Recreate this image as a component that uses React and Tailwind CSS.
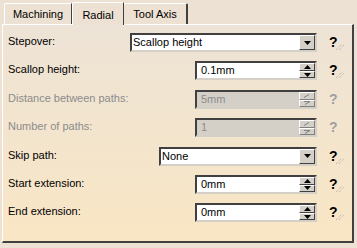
import React from "react";

const FONT = { fontFamily: '"Liberation Sans", Arial, sans-serif' };

function Help({ disabled }) {
  return (
    <div className="relative w-[20px] h-[19px] ml-[12px]">
      <span
        className={`absolute left-[0px] top-[0px] text-[14px] leading-[18px] font-bold ${disabled ? "text-[#a0a0a0]" : "text-black"}`}
      >
        ?
      </span>
      {!disabled && (
        <svg className="absolute left-[6px] top-[10px]" width="10" height="8" viewBox="0 0 10 8">
          <path d="M1 7 L7 1 M4 7 L9 2" stroke="#b0b0b0" strokeWidth="1" strokeDasharray="1 1" />
        </svg>
      )}
    </div>
  );
}

function DropButton() {
  return (
    <div className="w-[16px] h-[15px] bg-[#d4d0c8] border border-t-white border-l-white border-r-[#404040] border-b-[#404040] flex items-center justify-center">
      <svg width="7" height="4" viewBox="0 0 7 4">
        <path d="M0 0 H7 L3.5 4 Z" fill="#000" />
      </svg>
    </div>
  );
}

function Combo({ value, width }) {
  return (
    <div
      className={`${width} h-[19px] bg-white border-2 border-t-[#404040] border-l-[#404040] border-r-[#d4d0c8] border-b-[#d4d0c8] flex items-center`}
    >
      <span className="flex-1 pl-[1px] text-[11px] text-black leading-[15px]">{value}</span>
      <DropButton />
    </div>
  );
}

function Arrow({ up, disabled }) {
  if (disabled) {
    return (
      <svg width="8" height="4" viewBox="0 0 8 4">
        <path d={up ? "M1 3.5 L6 0.5" : "M1 0.5 H7 M2 3.5 L7 0.5"} stroke="#808080" strokeWidth="1" />
      </svg>
    );
  }
  return (
    <svg width="7" height="4" viewBox="0 0 7 4">
      <path d={up ? "M3.5 0 L7 4 H0 Z" : "M0 0 H7 L3.5 4 Z"} fill="#000" />
    </svg>
  );
}

function Spin({ value, disabled }) {
  return (
    <div
      className={`w-[122px] h-[19px] border-2 border-t-[#404040] border-l-[#404040] border-r-[#d4d0c8] border-b-[#d4d0c8] flex items-center ${disabled ? "bg-[#d4d0c8]" : "bg-white"}`}
    >
      <span className={`flex-1 pl-[4px] text-[11px] leading-[15px] ${disabled ? "text-[#8c8c8c]" : "text-black"}`}>
        {value}
      </span>
      <div className={`w-[16px] h-[15px] flex flex-col ${disabled ? "" : "bg-[#404040]"}`}>
        <div className={`h-[8px] bg-[#d4d0c8] border border-t-white border-l-white flex items-center justify-center ${disabled ? "border-r-[#808080] border-b-[#808080]" : "border-r-[#404040] border-b-[#404040]"}`}>
          <Arrow up disabled={disabled} />
        </div>
        <div className={`h-[7px] bg-[#d4d0c8] border border-t-white border-l-white flex items-center justify-center ${disabled ? "border-r-[#808080] border-b-[#808080]" : "border-r-[#404040] border-b-[#404040]"}`}>
          <Arrow disabled={disabled} />
        </div>
      </div>
    </div>
  );
}

function Row({ label, disabled, children }) {
  return (
    <div className="flex items-start h-[19px]">
      <span
        className={`flex-1 text-[11px] leading-[13px] pt-[2px] ${disabled ? "text-[#8c8c8c]" : "text-black"}`}
      >
        {label}
      </span>
      {children}
      <Help disabled={disabled} />
    </div>
  );
}

export default function App() {
  return (
    <div
      style={FONT}
      className="w-[357px] h-[248px] bg-[#ece1d2] overflow-hidden relative"
    >
      {/* tab strip */}
      <div className="flex items-end h-[24px] pl-[4px]">
        <div className="w-[68px] h-[21px] border border-b-0 border-t-white border-l-white border-r-[#404040] rounded-tl-[2px] flex items-center justify-center text-[11px] text-black">
          Machining
        </div>
        <div className="relative z-10 w-[52px] h-[23px] -mb-[1px] bg-[#ece1d2] border border-b-0 border-t-white border-l-white border-r-[#404040] rounded-tl-[2px] flex items-start pt-[4px] justify-center text-[11px] text-black">
          Radial
        </div>
        <div className="w-[64px] h-[21px] border border-b-0 border-l-0 border-t-white border-r-[#404040] border-r-2 rounded-tr-[2px] flex items-center justify-center text-[11px] text-black">
          Tool Axis
        </div>
      </div>

      {/* panel */}
      <div className="ml-[2px] w-[352px] h-[219px] border border-t-white border-l-white border-r-[#404040] border-b-[#404040] border-r-2 border-b-2 bg-gradient-to-b from-[#ede3d6] to-[#f9e6c4] pl-[5px] pr-[3px] pt-[8px] flex flex-col gap-[9.4px]">
        <Row label="Stepover:">
          <Combo value="Scallop height" width="w-[187px]" />
        </Row>
        <Row label="Scallop height:">
          <Spin value="0.1mm" />
        </Row>
        <Row label="Distance between paths:" disabled>
          <Spin value="5mm" disabled />
        </Row>
        <Row label="Number of paths:" disabled>
          <Spin value="1" disabled />
        </Row>
        <Row label="Skip path:">
          <Combo value="None" width="w-[158px]" />
        </Row>
        <Row label="Start extension:">
          <Spin value="0mm" />
        </Row>
        <Row label="End extension:">
          <Spin value="0mm" />
        </Row>
      </div>
    </div>
  );
}
